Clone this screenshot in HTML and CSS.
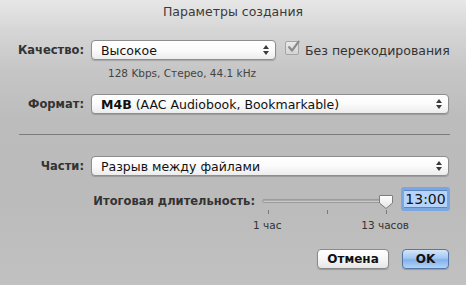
FILE: index.html
```html
<!DOCTYPE html>
<html lang="ru">
<head>
<meta charset="utf-8">
<title>Параметры создания</title>
<link rel="stylesheet" href="styles.css">
</head>
<body>
<div class="window">
  <div class="titlebar">Параметры создания</div>
  <div class="content">
    <div class="row row-quality">
      <div class="label">Качество:</div>
      <div class="popup popup-short"><span class="popup-text">Высокое</span><span class="arrows"><i class="up"></i><i class="down"></i></span></div>
      <div class="check"><span class="box"><svg width="14" height="14" viewBox="0 0 14 14"><path d="M3.2 7.2 L6 10.6 L12.6 1.6" fill="none" stroke="#8a8a8a" stroke-width="2.2" stroke-linecap="round" stroke-linejoin="round"/></svg></span><span class="check-label">Без перекодирования</span></div>
    </div>
    <div class="info">128 Kbps, Стерео, 44.1 kHz</div>
    <div class="row row-format">
      <div class="label">Формат:</div>
      <div class="popup popup-long"><span class="popup-text"><b>M4B</b> (AAC Audiobook, Bookmarkable)</span><span class="arrows"><i class="up"></i><i class="down"></i></span></div>
    </div>
    <div class="separator"></div>
    <div class="row row-parts">
      <div class="label">Части:</div>
      <div class="popup popup-long"><span class="popup-text">Разрыв между файлами</span><span class="arrows"><i class="up"></i><i class="down"></i></span></div>
    </div>
    <div class="row row-duration">
      <div class="label label-wide">Итоговая длительность:</div>
      <div class="slider">
        <div class="track"></div>
        <div class="thumb"><svg width="16" height="16" viewBox="0 0 16 16"><defs><linearGradient id="tg" x1="0" y1="0" x2="0" y2="1"><stop offset="0" stop-color="#ffffff"/><stop offset="1" stop-color="#e4e4e4"/></linearGradient></defs><path d="M2 1.5 H14 Q14.5 1.5 14.5 2 V9 L8 14.5 L1.5 9 V2 Q1.5 1.5 2 1.5 Z" fill="url(#tg)" stroke="#7d7d7d" stroke-width="1"/></svg></div>
        <div class="ticks"><i></i><i></i><i></i></div>
        <div class="tick-labels"><span>1 час</span><span>13 часов</span></div>
      </div>
      <div class="field"><span class="sel">13:00</span></div>
    </div>
    <div class="buttons">
      <div class="btn btn-cancel">Отмена</div>
      <div class="btn btn-ok">OK</div>
    </div>
  </div>
</div>
</body>
</html>
```
FILE: styles.css
```css
html, body {
  margin: 0;
  padding: 0;
}
body {
  width: 466px;
  height: 285px;
  overflow: hidden;
}
.window {
  width: 466px;
  height: 285px;
  background: linear-gradient(to bottom, #e7e7e7 0px, #d6d6d6 30px, #c6c6c6 70px, #bcbcbc 120px, #bbbbbb 200px, #c1c1c1 285px);
  font-family: "DejaVu Sans", "Liberation Sans", sans-serif;
  color: #222;
  display: flex;
  flex-direction: column;
}
.titlebar {
  height: 24px;
  line-height: 24px;
  text-align: center;
  font-size: 12.5px;
  color: #3a3a3a;
}
.content {
  padding-top: 16px;
  display: flex;
  flex-direction: column;
}
.row {
  display: flex;
  align-items: center;
}
.label {
  width: 84px;
  text-align: right;
  margin-right: 7px;
  font-size: 11.5px;
  font-weight: bold;
  color: #333;
}
.label-wide {
  width: 255px;
}
.popup {
  height: 20px;
  box-sizing: border-box;
  border: 1px solid #8e8e8e;
  border-radius: 4px;
  background: linear-gradient(to bottom, #ffffff 0%, #fbfbfb 50%, #ececec 100%);
  box-shadow: 0 1px 1px rgba(0,0,0,0.18);
  display: flex;
  align-items: center;
  justify-content: space-between;
  padding: 0 6px 0 9px;
  font-size: 12.5px;
  color: #111;
}
.popup-short {
  width: 185px;
}
.popup-long {
  width: 358px;
}
.arrows {
  display: flex;
  flex-direction: column;
  align-items: center;
  gap: 2px;
}
.arrows i {
  display: block;
  width: 0;
  height: 0;
  border-left: 3px solid transparent;
  border-right: 3px solid transparent;
}
.arrows .up {
  border-bottom: 4px solid #3a3a3a;
}
.arrows .down {
  border-top: 4px solid #3a3a3a;
}
.check {
  display: flex;
  align-items: center;
  margin-left: 9px;
}
.box {
  width: 14px;
  height: 14px;
  box-sizing: border-box;
  border: 1px solid #a5a5a5;
  border-radius: 2px;
  background: linear-gradient(to bottom, #e9e9e9, #d4d4d4);
  display: flex;
  margin-top: -4px;
  position: relative;
}
.box svg {
  position: absolute;
  left: 0px;
  top: -2px;
}
.check-label {
  margin-left: 6px;
  font-size: 12.5px;
  color: #333;
}
.info {
  margin-top: 7px;
  padding-left: 108px;
  font-size: 10.5px;
  line-height: 13px;
  color: #444;
}
.row-format {
  margin-top: 14px;
}
.separator {
  margin: 20px 16px 0 19px;
  height: 1px;
  background: #7c7c7c;
}
.row-parts {
  margin-top: 21px;
}
.row-duration {
  margin-top: 11px;
  height: 24px;
  align-items: flex-start;
}
.row-duration .label {
  margin-top: 7px;
}
.slider {
  width: 132px;
  height: 40px;
  position: relative;
}
.track {
  position: absolute;
  left: 0;
  right: 4px;
  top: 12px;
  height: 4px;
  border-radius: 2px;
  background: linear-gradient(to bottom, #9a9a9a, #d8d8d8);
  border: 1px solid #9c9c9c;
  box-sizing: border-box;
}
.thumb {
  position: absolute;
  left: 116px;
  top: 7px;
  width: 16px;
  height: 16px;
}
.ticks {
  position: absolute;
  left: 6px;
  top: 23px;
  width: 119px;
  display: flex;
  justify-content: space-between;
}
.ticks i {
  display: block;
  width: 1px;
  height: 4px;
  background: #7a7a7a;
}
.tick-labels {
  position: absolute;
  left: -9px;
  top: 32px;
  width: 156px;
  display: flex;
  justify-content: space-between;
  font-size: 10.5px;
  color: #333;
}
.field {
  margin-left: 7px;
  width: 49px;
  height: 24px;
  box-sizing: border-box;
  border: 3px solid #7aa7df;
  border-radius: 3px;
  background: #fff;
  display: flex;
  align-items: center;
  justify-content: center;
  font-size: 14px;
  color: #111;
  box-shadow: inset 0 0 0 1px #5b87c4;
}
.sel {
  background: #b6d4fb;
  padding: 0 1px;
  line-height: 16px;
}
.buttons {
  margin-top: 38px;
  display: flex;
  justify-content: flex-end;
  gap: 13px;
  padding-right: 17px;
}
.btn {
  height: 20px;
  box-sizing: border-box;
  border-radius: 4px;
  display: flex;
  align-items: center;
  justify-content: center;
  font-size: 12px;
  font-weight: bold;
  color: #111;
  box-shadow: 0 1px 1px rgba(0,0,0,0.2);
}
.btn-cancel {
  width: 72px;
  border: 1px solid #8a8a8a;
  background: linear-gradient(to bottom, #ffffff 0%, #f7f7f7 50%, #e6e6e6 100%);
}
.btn-ok {
  width: 47px;
  border: 1px solid #5577a8;
  background: linear-gradient(to bottom, #d4e6fb 0%, #a3c7f1 45%, #82b1ea 55%, #b2d4f8 100%);
}
```
